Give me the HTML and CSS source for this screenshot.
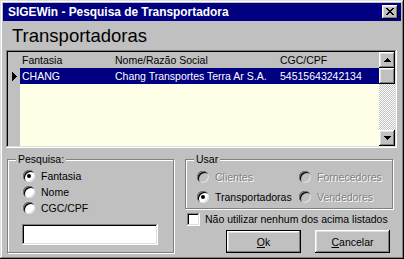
FILE: index.html
```html
<!DOCTYPE html>
<html lang="pt">
<head>
    <meta charset="UTF-8">
    <title>SIGEWin - Pesquisa de Transportadora</title>
    <link rel="stylesheet" href="styles.css">
</head>
<body>
    <div class="window">
        <div class="titlebar">
            <span class="title">SIGEWin - Pesquisa de Transportadora</span>
            <span class="close raised">
                <svg width="8" height="7" viewBox="0 0 8 7" shape-rendering="crispEdges">
                    <path d="M0 0h2v1H0z M6 0h2v1H6z M1 1h2v1H1z M5 1h2v1H5z M2 2h4v1H2z M3 3h2v1H3z M2 4h4v1H2z M1 5h2v1H1z M5 5h2v1H5z M0 6h2v1H0z M6 6h2v1H6z" fill="#000"/>
                </svg>
            </span>
        </div>

        <h1 class="heading">Transportadoras</h1>

        <div class="grid sunken">
            <div class="indicator">
                <div class="ind-cell"></div>
                <div class="ind-cell">
                    <svg width="5" height="9" viewBox="0 0 5 9" shape-rendering="crispEdges">
                        <path d="M0 0L5 4.5L0 9z" fill="#000"/>
                    </svg>
                </div>
            </div>
            <div class="cells">
                <div class="row head">
                    <span class="col c1">Fantasia</span>
                    <span class="col c2">Nome/Razão Social</span>
                    <span class="col c3">CGC/CPF</span>
                </div>
                <div class="row selected">
                    <span class="col c1">CHANG</span>
                    <span class="col c2">Chang Transportes Terra Ar S.A.</span>
                    <span class="col c3">54515643242134</span>
                </div>
            </div>
            <div class="scrollbar">
                <div class="sb-btn raised">
                    <svg width="7" height="4" viewBox="0 0 7 4" shape-rendering="crispEdges">
                        <path d="M3 0h1v1h1v1h1v1h1v1H0V3h1V2h1V1h1z" fill="#000"/>
                    </svg>
                </div>
                <div class="sb-thumb raised"></div>
                <div class="sb-track"></div>
                <div class="sb-btn raised">
                    <svg width="7" height="4" viewBox="0 0 7 4" shape-rendering="crispEdges">
                        <path d="M0 0h7v1H6v1H5v1H4v1H3V3H2V2H1V1H0z" fill="#000"/>
                    </svg>
                </div>
            </div>
        </div>

        <div class="bottom">
            <div class="group pesquisa">
                <span class="group-title">Pesquisa:</span>
                <label class="opt"><span class="radio checked"></span>Fantasia</label>
                <label class="opt"><span class="radio"></span>Nome</label>
                <label class="opt"><span class="radio"></span>CGC/CPF</label>
                <div class="edit sunken"></div>
            </div>

            <div class="right">
                <div class="group usar">
                    <span class="group-title">Usar</span>
                    <div class="opts">
                        <label class="opt disabled"><span class="radio"></span>Clientes</label>
                        <label class="opt disabled"><span class="radio"></span>Fornecedores</label>
                        <label class="opt"><span class="radio checked"></span>Transportadoras</label>
                        <label class="opt disabled"><span class="radio"></span>Vendedores</label>
                    </div>
                </div>
                <label class="check"><span class="checkbox sunken"></span>Não utilizar nenhum dos acima listados</label>
                <div class="buttons">
                    <button class="btn default"><u>O</u>k</button>
                    <button class="btn raised"><u>C</u>ancelar</button>
                </div>
            </div>
        </div>
    </div>
</body>
</html>
```

FILE: styles.css
```css
body {
    margin: 0;
    background: #c0c0c0;
    font-family: "Liberation Sans", Arial, sans-serif;
    font-size: 10.5px;
    color: #000;
}

/* bevels */
.raised {
    background: #c0c0c0;
    box-shadow: inset -1px -1px #000, inset 1px 1px #fff, inset -2px -2px #808080, inset 2px 2px #dfdfdf;
}

.sunken {
    box-shadow: inset -1px -1px #fff, inset 1px 1px #808080, inset -2px -2px #dfdfdf, inset 2px 2px #000;
}

.window {
    width: 404px;
    height: 259px;
    box-sizing: border-box;
    padding: 3px;
    background: #c0c0c0;
    box-shadow: inset -1px -1px #000, inset 1px 1px #dfdfdf, inset -2px -2px #808080, inset 2px 2px #fff;
    display: flex;
    flex-direction: column;
}

.titlebar {
    height: 18px;
    flex-shrink: 0;
    background: #000080;
    color: #fff;
    display: flex;
    align-items: center;
    justify-content: space-between;
    padding: 0 3px 0 5px;
}

.title {
    font-weight: bold;
    font-size: 11.9px;
}

.close {
    width: 16px;
    height: 14px;
    display: flex;
    align-items: center;
    justify-content: center;
}

.close svg {
    margin: 0 1px 1px 0;
}

.heading {
    margin: 4px 0 0 9px;
    font-size: 18.5px;
    line-height: 21px;
    font-weight: normal;
}

/* grid */
.grid {
    margin: 4px 4px 0 3px;
    height: 98px;
    box-sizing: border-box;
    padding: 2px;
    display: flex;
    background: #ffffe7;
}

.indicator {
    width: 12px;
    background: #c0c0c0;
}

.ind-cell {
    height: 16px;
    display: flex;
    align-items: center;
    justify-content: center;
}

.cells {
    flex: 1;
}

.row {
    height: 16px;
    display: flex;
    align-items: center;
    white-space: nowrap;
}

.row.head {
    background: #c0c0c0;
}

.row.selected {
    background: #000080;
    color: #fff;
}

.col {
    padding-left: 2px;
    box-sizing: border-box;
}

.c1 { width: 93px; }
.c2 { width: 165px; }
.c3 { flex: 1; }

.scrollbar {
    width: 16px;
    display: flex;
    flex-direction: column;
}

.sb-btn {
    height: 16px;
    display: flex;
    align-items: center;
    justify-content: center;
}

.sb-thumb {
    height: 16px;
}

.sb-track {
    flex: 1;
    background: repeating-conic-gradient(#fff 0 25%, #c0c0c0 0 50%) 0 0 / 2px 2px;
}

/* bottom area */
.bottom {
    display: flex;
    margin: 11px 0 0 4px;
}

.group {
    position: relative;
    box-sizing: border-box;
    border: 1px solid #808080;
    box-shadow: 1px 1px 0 #fff, inset 1px 1px 0 #fff;
}

.group-title {
    position: absolute;
    top: -7px;
    left: 8px;
    padding: 0 2px;
    line-height: 13px;
    background: #c0c0c0;
}

.pesquisa {
    width: 167px;
    padding: 8px 0 6px 14px;
}

.opt {
    display: flex;
    align-items: center;
    gap: 6px;
    height: 16px;
    padding-left: 1px;
    white-space: nowrap;
}

.radio {
    width: 12px;
    height: 12px;
    border-radius: 50%;
    background: #fff;
    position: relative;
    box-shadow: inset 1px 1px #808080, inset -1px -1px #dfdfdf, inset 2px 2px #000;
}

.radio.checked::after {
    content: "";
    position: absolute;
    left: 4px;
    top: 4px;
    width: 4px;
    height: 4px;
    border-radius: 50%;
    background: #000;
}

.opt.disabled {
    color: #808080;
    text-shadow: 1px 1px 0 #fff;
}

.opt.disabled .radio {
    background: #c0c0c0;
}

.edit {
    margin-top: 8px;
    width: 136px;
    height: 21px;
    background: #fff;
}

.right {
    margin-left: 11px;
    width: 208px;
    display: flex;
    flex-direction: column;
}

.usar {
    padding: 9px 0 3px 11px;
}

.opts {
    display: grid;
    grid-template-columns: 102px auto;
    row-gap: 4px;
}

.opts .opt {
    padding-left: 0;
}

.check {
    margin: 3px 0 0 2px;
    height: 14px;
    display: flex;
    align-items: center;
    gap: 5px;
    white-space: nowrap;
}

.checkbox {
    width: 13px;
    height: 13px;
    background: #fff;
}

.buttons {
    margin-top: 4px;
    padding-right: 3px;
    display: flex;
    justify-content: flex-end;
    gap: 14px;
}

.btn {
    width: 75px;
    height: 23px;
    box-sizing: border-box;
    border: none;
    padding: 0;
    font-family: inherit;
    font-size: 10.5px;
    color: #000;
    background: #c0c0c0;
}

.btn.default {
    border: 1px solid #000;
    box-shadow: inset -1px -1px #808080, inset 1px 1px #fff, inset -2px -2px #c0c0c0, inset 2px 2px #dfdfdf;
}
```
